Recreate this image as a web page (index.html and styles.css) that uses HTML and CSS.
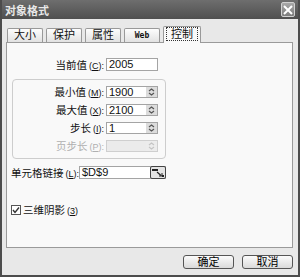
FILE: index.html
```html
<!DOCTYPE html>
<html>
<head>
    <title>对象格式</title>
    <meta charset="utf-8">
    <link rel="stylesheet" href="styles.css">
</head>
<body>
    <div class="window">
        <div class="titlebar">
            <span class="title">对象格式</span>
            <span class="close">
                <svg width="10" height="10" viewBox="0 0 10 10"><path d="M1 1 L9 9 M9 1 L1 9" stroke="#fff" stroke-width="2"/></svg>
            </span>
        </div>
        <div class="client">
            <div class="tabs">
                <div class="tab">大小</div>
                <div class="tab">保护</div>
                <div class="tab">属性</div>
                <div class="tab web">Web</div>
                <div class="tab active"><span class="focus">控制</span></div>
            </div>
            <div class="panel">
                <div class="row current">
                    <span class="label">当前值<span class="key">(<u>C</u>):</span></span>
                    <div class="input">2005</div>
                </div>
                <div class="group">
                    <div class="row">
                        <span class="label">最小值<span class="key">(<u>M</u>):</span></span>
                        <div class="input spin"><span class="val">1900</span><span class="arrows"><svg width="7" height="8" viewBox="0 0 7 8"><path d="M1 3 L3.5 1 L6 3 M1 5 L3.5 7 L6 5" fill="none" stroke="#555" stroke-width="1.2"/></svg></span></div>
                    </div>
                    <div class="row">
                        <span class="label">最大值<span class="key">(<u>X</u>):</span></span>
                        <div class="input spin"><span class="val">2100</span><span class="arrows"><svg width="7" height="8" viewBox="0 0 7 8"><path d="M1 3 L3.5 1 L6 3 M1 5 L3.5 7 L6 5" fill="none" stroke="#555" stroke-width="1.2"/></svg></span></div>
                    </div>
                    <div class="row">
                        <span class="label">步长<span class="key">(<u>I</u>):</span></span>
                        <div class="input spin"><span class="val">1</span><span class="arrows"><svg width="7" height="8" viewBox="0 0 7 8"><path d="M1 3 L3.5 1 L6 3 M1 5 L3.5 7 L6 5" fill="none" stroke="#555" stroke-width="1.2"/></svg></span></div>
                    </div>
                    <div class="row disabled">
                        <span class="label">页步长<span class="key">(<u>P</u>):</span></span>
                        <div class="input spin"><span class="val"></span><span class="arrows"><svg width="7" height="8" viewBox="0 0 7 8"><path d="M1 3 L3.5 1 L6 3 M1 5 L3.5 7 L6 5" fill="none" stroke="#c4c4c4" stroke-width="1.2"/></svg></span></div>
                    </div>
                </div>
                <div class="row link">
                    <span class="label">单元格链接<span class="key">(<u>L</u>):</span></span>
                    <div class="input linkinput">
                        <span class="val">$D$9</span>
                        <span class="pick"><svg width="12" height="8" viewBox="0 0 12 8"><rect x="0" y="0" width="6" height="2" fill="#222"/><path d="M5 3 L9 6.5" stroke="#222" stroke-width="1.2"/><path d="M7 7 L10 7 L10 4" fill="none" stroke="#222" stroke-width="1"/><rect x="10" y="6" width="2" height="2" fill="#222"/></svg></span>
                    </div>
                </div>
                <div class="check">
                    <span class="box"><svg width="8" height="8" viewBox="0 0 8 8"><path d="M1 4 L3 6.5 L7 1.5" fill="none" stroke="#333" stroke-width="1.4"/></svg></span>
                    <span class="label">三维阴影<span class="key">(<u>3</u>)</span></span>
                </div>
            </div>
            <div class="buttons">
                <button>确定</button>
                <button>取消</button>
            </div>
        </div>
    </div>
</body>
</html>
```

FILE: styles.css
```css
body {
    margin: 0;
    font-family: "Liberation Sans", "Noto Sans CJK SC", sans-serif;
    font-size: 11px;
    color: #111;
}
.window {
    width: 300px;
    height: 277px;
    box-sizing: border-box;
    background: #e8e8e8;
    border: 2px solid #4c4c4c;
    border-top: none;
}
.titlebar {
    height: 19px;
    background: linear-gradient(#6e6e6e, #4f4f4f);
    display: flex;
    align-items: center;
    justify-content: space-between;
    padding: 0 3px;
}
.title {
    color: #e8e8e8;
    font-weight: bold;
    font-size: 11px;
}
.close {
    width: 14px;
    height: 15px;
    box-sizing: border-box;
    border: 1px solid #d0d0d0;
    border-radius: 2px;
    background: linear-gradient(#a8a8a8, #7c7c7c);
    display: flex;
    align-items: center;
    justify-content: center;
}
.client {
    padding: 7px 5px 0 4px;
}
.tabs {
    display: flex;
    align-items: flex-end;
    gap: 3px;
    height: 16px;
    padding-left: 1px;
}
.tab {
    width: 36px;
    height: 14px;
    box-sizing: border-box;
    border: 1px solid #999;
    border-bottom: none;
    border-radius: 2px 2px 0 0;
    background: linear-gradient(#fdfdfd, #e2e2e2);
    text-align: center;
    line-height: 13px;
}
.web {
    font-size: 8px;
    font-family: "DejaVu Sans Mono", monospace;
    font-weight: bold;
}
.tab.active {
    width: 38px;
    height: 17px;
    margin-bottom: -1px;
    background: #f9f9f9;
    position: relative;
    line-height: 15px;
}
.focus {
    border: 1px dotted #333;
    padding: 0 4px;
}
.panel {
    height: 206px;
    box-sizing: border-box;
    border: 1px solid #9a9a9a;
    background: #f9f9f9;
    padding-top: 14px;
}
.row {
    display: flex;
    align-items: center;
}
.label {
    font-size: 10.5px;
    text-align: right;
    margin-right: 2px;
    white-space: nowrap;
}
.key {
    font-size: 9px;
    margin-left: 2px;
}
.current .label {
    width: 97px;
}
.input {
    width: 52px;
    height: 13px;
    box-sizing: border-box;
    border: 1px solid #a4a4a4;
    background: #fff;
    line-height: 11px;
    padding-left: 2px;
}
.group {
    width: 154px;
    box-sizing: border-box;
    margin: 7px 0 0 5px;
    border: 1px solid #cdcdcd;
    border-radius: 4px;
    padding: 4px 0 5px;
    display: flex;
    flex-direction: column;
    gap: 3px;
}
.group .label {
    width: 91px;
}
.spin {
    height: 12px;
    display: flex;
    justify-content: space-between;
    padding-right: 0;
}
.arrows {
    width: 11px;
    height: 10px;
    background: #dcdcdc;
    display: flex;
    align-items: center;
    justify-content: center;
}
.disabled .label {
    color: #b0b0b0;
}
.disabled .input {
    background: #ebebeb;
    border-color: #cfcfcf;
}
.disabled .arrows {
    background: #ececec;
}
.link {
    margin-top: 6px;
    padding-left: 4px;
}
.link .label {
    width: 66px;
    text-align: left;
}
.linkinput {
    width: 87px;
    display: flex;
    justify-content: space-between;
    align-items: center;
    padding-right: 0;
}
.pick {
    width: 16px;
    height: 13px;
    box-sizing: border-box;
    border: 1px solid #444;
    border-radius: 2px;
    background: #e4e4e4;
    margin-right: -1px;
    display: flex;
    align-items: center;
    justify-content: center;
}
.check {
    display: flex;
    align-items: center;
    gap: 2px;
    margin-top: 22px;
    padding-left: 4px;
}
.check .label {
    text-align: left;
}
.box {
    width: 10px;
    height: 10px;
    box-sizing: border-box;
    border: 1px solid #555;
    background: #fff;
    display: flex;
    align-items: center;
    justify-content: center;
}
.buttons {
    display: flex;
    justify-content: flex-end;
    gap: 8px;
    margin-top: 7px;
}
.buttons button {
    width: 51px;
    height: 14px;
    box-sizing: border-box;
    border: 1px solid #555;
    border-radius: 3px;
    background: linear-gradient(#fbfbfb, #dadada);
    font-family: "Liberation Sans", "Noto Sans CJK SC", sans-serif;
    font-size: 11px;
    line-height: 11px;
    padding: 0;
}
```
